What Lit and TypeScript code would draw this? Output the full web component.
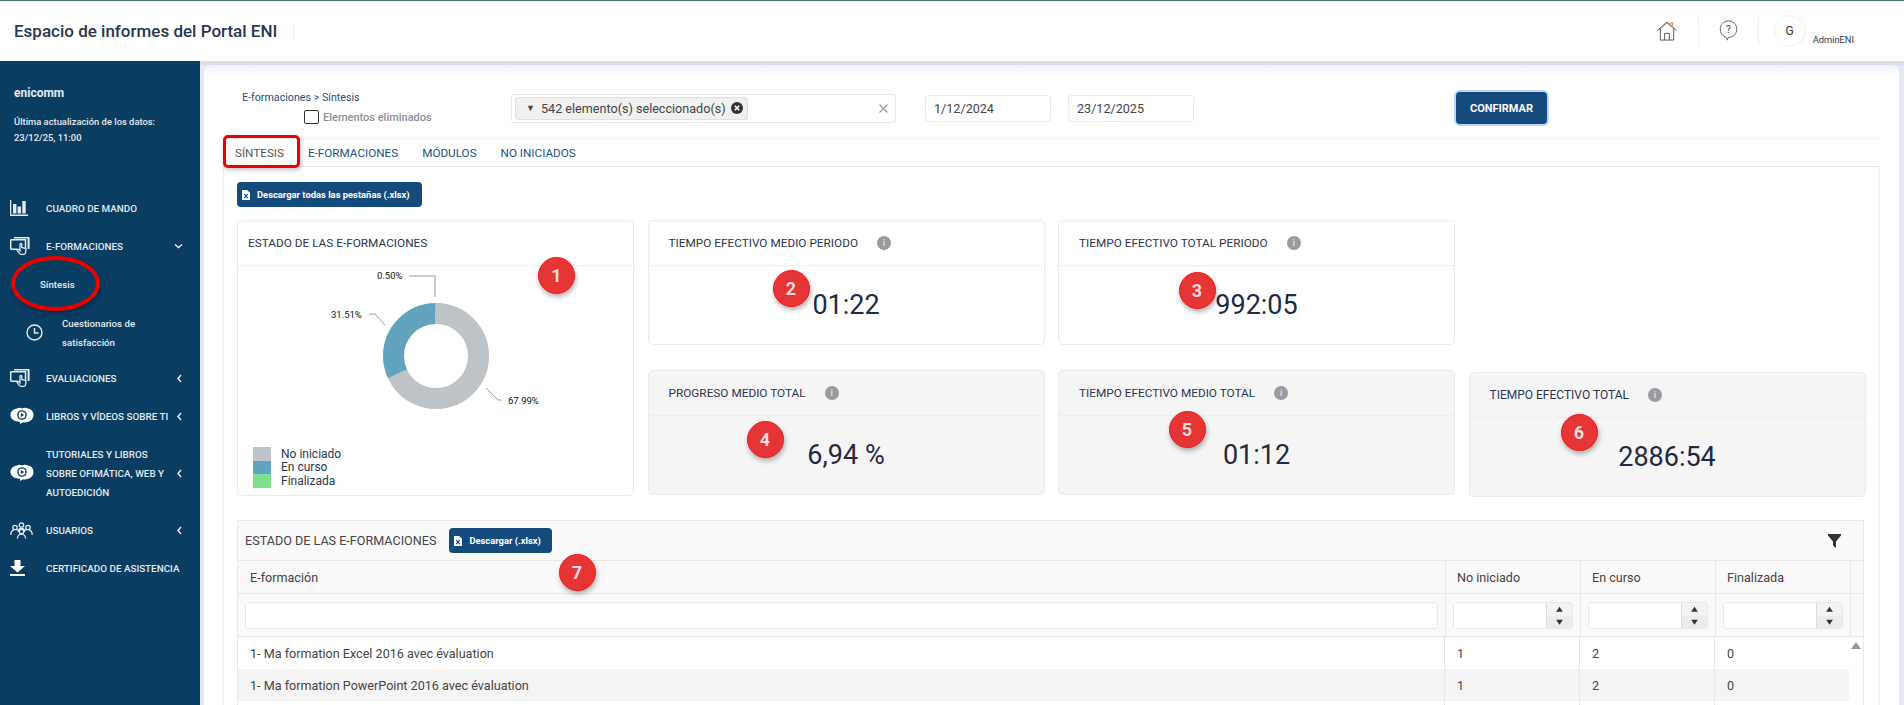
import { LitElement, html, css, svg } from "lit";
import { customElement } from "lit/decorators.js";

const chartIcon = html`<svg width="18" height="16" viewBox="0 0 18 16"><path fill="#e4eaf0" d="M0 0h1.300v14.600H18V16H0zM3 4h3.400v9.500H3zM7.600 6.500H11v7H7.600zM12.300 1h3.400v12.500h-3.400z"/></svg>`;
const handIcon = html`<svg width="20" height="18" viewBox="0 0 20 18"><path fill="#e4eaf0" d="M4 0h14.600c.6 0 1 .4 1 1v10c0 .6-.4 1-1 1h-1V1.600H4z"/><path fill="none" stroke="#e4eaf0" stroke-width="1.500" d="M1.500 2.700h14v9.600h-6M7 12.300H1.500c-.5 0-.8-.3-.8-.8V3.400c0-.4.3-.7.8-.7"/><path fill="#0a3d62" stroke="#e4eaf0" stroke-width="1.300" d="M10 7.200c0-1.200 1.800-1.200 1.800 0v3.300l3.300.8c.8.200 1 .8.900 1.500l-.5 3c-.2.900-.8 1.500-1.800 1.500h-2.600c-.8 0-1.300-.3-1.800-.9l-2.200-3c-.6-.9.600-1.800 1.300-1l1.600 1.500z"/></svg>`;
const eyeIcon = html`<svg width="24" height="18" viewBox="0 0 24 18"><path fill="#fff" d="M7 1.500c2-1 3.500-.8 5 0 1.500-.8 4-1 6 0 3 .2 5.500 3.200 5.500 6.500s-2.500 6.300-5.500 6.700c-1.500.8-3.300.9-4.800.5L10 17v-2.200c-1 0-2-.1-3-.5C3.500 14 .5 11.500.5 8S3.500 1.800 7 1.500z"/><circle cx="12" cy="8" r="4.800" fill="#0a3d62"/><circle cx="12" cy="8" r="3.400" fill="#fff"/><path fill="#0a3d62" d="M10.800 5.900 14.200 8l-3.400 2.100z"/></svg>`;
const usersIcon = html`<svg width="23" height="17" viewBox="0 0 23 17" fill="none" stroke="#e4eaf0" stroke-width="1.300"><circle cx="5" cy="5.500" r="2.200"/><path d="M.8 13c0-2.500 1.500-4.500 3-4.800M8 7.500 6.700 8.200"/><circle cx="18" cy="5.500" r="2.200"/><path d="M22.200 13c0-2.500-1.500-4.500-3-4.800M15 7.500l1.300.7"/><circle cx="11.500" cy="3" r="2.200"/><path d="M8.300 10c0-2 1.300-3.600 3.200-3.600s3.200 1.600 3.200 3.600"/><circle cx="11.500" cy="9.500" r="2.200"/><path d="M7.400 16.600c0-2.500 1.700-4.500 4.100-4.500s4.100 2 4.100 4.500"/></svg>`;
const downloadIcon = html`<svg width="15" height="16" viewBox="0 0 15 16"><path fill="#fff" d="M4.500 0h6v6H15L7.500 12.500 0 6h4.500zM0 14h15v2H0z"/></svg>`;
const clockIcon = html`<svg width="17" height="17" viewBox="0 0 17 17" fill="none" stroke="#e8edf2" stroke-width="1.400"><circle cx="8.500" cy="8.500" r="7.500"/><path d="M8.500 4v5h4"/></svg>`;
const fileIcon = html`<svg width="8" height="10" viewBox="0 0 8 10"><path fill="#fff" d="M0 0h5.200L8 2.800V10H0z"/><path stroke="#154a7d" stroke-width="1.200" d="m2.200 4.200 3.600 4m0-4-3.600 4"/></svg>`;

const chevronLeft = html`<svg class="chev" width="7" height="9" viewBox="0 0 7 9"><path fill="none" stroke="#e8edf2" stroke-width="1.500" d="M5 1 2 4.500 5 8"/></svg>`;
const chevronDown = html`<svg class="chev" width="9" height="7" viewBox="0 0 9 7"><path fill="none" stroke="#e8edf2" stroke-width="1.500" d="M1 1.500l3.500 3 3.500-3"/></svg>`;

const slices = [
  { value: 67.99, color: "#bdc3c7", label: "No iniciado" },
  { value: 31.51, color: "#61a3bc", label: "En curso" },
  { value: 0.5, color: "#7ee08f", label: "Finalizada" },
];

const rows = [
  { name: "1- Ma formation Excel 2016 avec évaluation", a: 1, b: 2, c: 0 },
  { name: "1- Ma formation PowerPoint 2016 avec évaluation", a: 1, b: 2, c: 0 },
];

const badges = [
  { n: 1, x: 556.5, y: 275 },
  { n: 2, x: 791, y: 288 },
  { n: 3, x: 1197, y: 290 },
  { n: 4, x: 765, y: 439 },
  { n: 5, x: 1187, y: 429 },
  { n: 6, x: 1579, y: 432 },
  { n: 7, x: 577, y: 572 },
];

@customElement("app-root")
export class AppRoot extends LitElement {
  static styles = css`
    :host {
      display: block;
      position: relative;
      height: 705px;
      overflow: hidden;
      font-family: Roboto, "Liberation Sans", sans-serif;
      color: #333;
      background: #e4e8f2;
    }
    * {
      box-sizing: border-box;
    }

    .top {
      height: 61px;
      background: #fff;
      border-top: 1px solid #4c7a6c;
      display: flex;
      align-items: center;
      padding: 0 50px 0 14px;
    }
    .top h1 {
      margin: 0;
      font-size: 17px;
      font-weight: 500;
      color: #2a3550;
      padding-right: 16px;
      border-right: 1px solid #eceef2;
      line-height: 17px;
    }
    .top-right {
      margin-left: auto;
      display: flex;
      align-items: center;
    }
    .top-sep {
      width: 1px;
      height: 28px;
      background: #eceef2;
      margin: 0 20px;
    }
    .avatar {
      width: 32px;
      height: 32px;
      border-radius: 50%;
      border: 1px solid #eef0f6;
      display: flex;
      align-items: center;
      justify-content: center;
      font-size: 12px;
      color: #333;
      margin-left: -5px;
    }
    .user {
      font-size: 9.3px;
      color: #2a3550;
      margin: 16px 0 0 7px;
    }

    .layout {
      display: flex;
      height: 644px;
    }
    .side {
      width: 200px;
      flex: none;
      background: #0a3d62;
      color: #e4eaf0;
      font-weight: 500;
    }
    .side-head {
      padding: 22px 14px 0;
    }
    .brand {
      font-size: 12px;
      font-weight: 700;
      line-height: 20px;
      margin-bottom: 11px;
    }
    .updated {
      font-size: 9.4px;
      line-height: 16px;
    }
    .menu {
      margin-top: 43px;
      font-size: 9.85px;
    }
    .item {
      display: flex;
      align-items: center;
      height: 38px;
      padding: 0 17px 0 10px;
      white-space: nowrap;
    }
    .item .ico {
      width: 36px;
      flex: none;
      display: flex;
    }
    .item.tall {
      height: 76px;
      line-height: 19px;
    }
    .chev {
      margin-left: auto;
    }
    .sub {
      display: flex;
      align-items: center;
      height: 39px;
      padding-left: 40px;
      font-size: 9.7px;
    }
    .sub.two {
      height: 55px;
      padding: 10px 0 8px 26px;
      line-height: 19px;
    }
    .sub.two svg {
      flex: none;
      margin-right: 19px;
    }

    .main {
      flex: 1;
      min-width: 0;
      border-top: 4px solid #dde0ea;
      padding: 0 5px 0 4px;
    }
    .sheet {
      height: 100%;
      background: linear-gradient(#f1f2f6, #fff 12px);
      border-radius: 6px 6px 0 0;
      padding-top: 25px;
    }

    .bar {
      display: flex;
      align-items: center;
      height: 36px;
      padding-left: 38px;
    }
    .crumbs {
      width: 269px;
      flex: none;
    }
    .crumb {
      font-size: 10.7px;
      line-height: 14px;
      color: #1c4f7e;
    }
    .deleted {
      display: flex;
      align-items: center;
      gap: 4px;
      height: 16px;
      margin: 4px 0 0 62px;
      font-size: 11px;
      font-weight: 500;
      color: #8c9099;
    }
    .box {
      width: 15px;
      height: 14px;
      border: 1px solid #333;
      border-radius: 2px;
      background: #fff;
    }
    .select {
      width: 385px;
      height: 29px;
      flex: none;
      border: 1px solid #e6e6ea;
      border-radius: 3px;
      display: flex;
      align-items: center;
      padding: 0 6px 0 3px;
    }
    .chip {
      width: 233px;
      height: 23px;
      background: #f0f0f0;
      border: 1px solid #e0e0e0;
      border-radius: 3px;
      display: flex;
      align-items: center;
      padding-left: 10px;
      font-size: 12.6px;
      color: #444;
      white-space: nowrap;
    }
    .caret {
      font-size: 9px;
      width: 15px;
    }
    .chip svg {
      margin-left: 5px;
    }
    .clear {
      margin-left: auto;
      margin-right: 1px;
    }
    .date {
      width: 126px;
      height: 27px;
      border: 1px solid #eaeaee;
      border-radius: 3px;
      padding: 0 8px;
      font: 12.6px Roboto, sans-serif;
      color: #444;
      outline: none;
      flex: none;
    }
    .date.d1 {
      margin-left: 29px;
    }
    .date.d2 {
      margin-left: 17px;
    }
    .confirm {
      margin-left: 262px;
      width: 91px;
      height: 32px;
      background: #154a7d;
      color: #fff;
      border: 0;
      border-radius: 4px;
      box-shadow: 0 0 0 2px #b9d7f6;
      font: 700 11px Roboto, sans-serif;
    }

    .tabs {
      margin: 12px 19px 0;
      display: flex;
      height: 29px;
      border-top: 1px solid #eceef2;
      border-bottom: 1px solid #e6e8ee;
      font-size: 11.7px;
      color: #1c4f7e;
    }
    .tab {
      padding: 0 12px;
      display: flex;
      align-items: center;
    }
    .tab.on {
      color: #555;
    }
    .panel {
      margin: 0 19px;
      height: 539px;
      border: 1px solid #eceef2;
      border-width: 0 1px;
      padding: 15px 15px 0 13px;
    }
    .dl {
      height: 25px;
      display: inline-flex;
      align-items: center;
      gap: 7px;
      padding: 0 5px;
      background: #154a7d;
      color: #fff;
      border-radius: 4px;
      font-size: 9.4px;
      font-weight: 700;
      white-space: nowrap;
    }
    .dl.all {
      width: 185px;
      display: flex;
      margin-bottom: 13px;
    }

    .cards {
      display: grid;
      grid-template-columns: repeat(4, 397px);
      grid-template-rows: 125px 125px;
      column-gap: 13.5px;
      row-gap: 25px;
    }
    .card {
      display: flex;
      flex-direction: column;
      border: 1px solid #e8eaf2;
      border-radius: 5px;
      background: #fff;
    }
    .card.grey {
      background: #f5f5f6;
    }
    .card.big {
      grid-row: 1 / span 2;
      margin-bottom: -1px;
    }
    .card.last {
      grid-column: 4;
      margin: 2px 0 -2px;
    }
    .card.c3 {
      grid-column: 3;
    }
    .card.c2 {
      grid-column: 2;
    }
    .card-head {
      height: 45px;
      flex: none;
      display: flex;
      align-items: center;
      padding-left: 20px;
      border-bottom: 1px solid #eceef4;
      font-size: 11.8px;
      color: #2a3550;
      white-space: nowrap;
    }
    .big .card-head {
      padding-left: 10px;
    }
    .last .card-head {
      font-size: 12px;
    }
    .info {
      width: 14px;
      height: 14px;
      border-radius: 50%;
      background: #9a9a9f;
      color: #ddd;
      font-size: 9px;
      font-weight: 700;
      display: flex;
      align-items: center;
      justify-content: center;
      margin-left: 19px;
    }
    .value {
      flex: 1;
      display: flex;
      align-items: center;
      justify-content: center;
      font-size: 27px;
      color: #1f2a44;
    }
    .chart {
      display: block;
      font-size: 9.5px;
      fill: #111;
    }
    .legend {
      padding-left: 15px;
      font-size: 12px;
      color: #2a3550;
    }
    .legend div {
      display: flex;
      align-items: center;
      height: 13.5px;
    }
    .legend i {
      width: 18px;
      height: 100%;
      margin-right: 10px;
    }

    .tbl {
      margin-top: 25px;
      border: 1px solid #e8e8e8;
      border-bottom: 0;
      font-size: 12.6px;
      color: #444;
    }
    .tbl-bar {
      height: 40px;
      background: #f9f9f9;
      display: flex;
      align-items: center;
      padding: 0 22px 0 7px;
      border-bottom: 1px solid #e8e8e8;
    }
    .tbl-bar span.t {
      margin-right: 13px;
    }
    .tbl-bar .dl {
      width: 103px;
    }
    .tbl-bar svg.funnel {
      margin-left: auto;
    }
    .hrow,
    .frow,
    .row {
      display: grid;
      grid-template-columns: 1207px 135px 135px 135px 13px;
    }
    .hrow {
      height: 33px;
      background: #f9f9f9;
      border-bottom: 1px solid #e8e8e8;
    }
    .hrow > div {
      display: flex;
      align-items: center;
      padding-left: 12px;
    }
    .hrow > div + div {
      padding-left: 11px;
    }
    .frow {
      height: 43px;
      background: #f9f9f9;
      border-bottom: 1px solid #e8e8e8;
      align-items: center;
    }
    .hrow > div + div,
    .frow > div + div {
      border-left: 1px solid #e8e8e8;
      height: 100%;
    }
    .frow > div {
      padding: 8px 7px;
      height: 100%;
    }
    .frow input {
      display: block;
      width: 100%;
      height: 27px;
      border: 1px solid #e8e8e8;
      border-radius: 3px;
      outline: none;
      background: #fff;
    }
    .spin {
      display: flex;
      height: 27px;
      width: 120px;
      border: 1px solid #e8e8e8;
      border-radius: 3px;
      overflow: hidden;
    }
    .spin span {
      flex: 1;
      background: #fff;
      border-right: 1px solid #ddd;
    }
    .spin b {
      width: 25px;
      flex: none;
      display: flex;
      flex-direction: column;
      background: #f3f3f3;
    }
    .spin b svg {
      flex: 1;
      display: block;
      width: 100%;
    }
    .spin b svg + svg {
      background: #ececec;
    }
    .rows {
      display: flex;
    }
    .rows-list {
      width: 1611px;
      flex: none;
    }
    .row {
      height: 32px;
      grid-template-columns: 1206px 135px 135px 135px;
    }
    .row:nth-child(even) {
      background: #f4f4f4;
    }
    .row > div {
      display: flex;
      align-items: center;
      padding-left: 12px;
    }
    .row > div + div {
      border-left: 1px solid #e8e8e8;
    }
    .scroll {
      flex: 1;
      display: flex;
      justify-content: center;
      padding-top: 5px;
    }

    .badge {
      position: absolute;
      width: 37px;
      height: 37px;
      margin: -18.5px 0 0 -18.5px;
      border-radius: 50%;
      background: #e53535;
      border: 1.5px solid #f21a1a;
      box-shadow: 1px 3px 5px rgba(0, 0, 0, 0.3);
      color: #f6dede;
      font-size: 18px;
      font-weight: 700;
      display: flex;
      align-items: center;
      justify-content: center;
    }
    .mark-tab {
      position: absolute;
      left: 223px;
      top: 135px;
      width: 77px;
      height: 33px;
      border: 3px solid #ee0000;
      border-radius: 5px;
      box-shadow: 1px 2px 4px rgba(0, 0, 0, 0.25);
    }
    .mark-oval {
      position: absolute;
      left: 11px;
      top: 256px;
      width: 89px;
      height: 55px;
      border: 4px solid #ee0000;
      border-radius: 50%;
      box-shadow: 1px 2px 4px rgba(0, 0, 0, 0.3);
    }
  `;

  private renderDonut() {
    const r = 42.5;
    const len = 2 * Math.PI * r;
    let acc = 0;
    return slices.map((s) => {
      const dash = (s.value / 100) * len;
      const part = svg`<circle cx="198" cy="90" r=${r} fill="none" stroke=${s.color} stroke-width="21"
        stroke-dasharray="${dash} ${len - dash}" stroke-dashoffset=${-acc} transform="rotate(-90 198 90)"/>`;
      acc += dash;
      return part;
    });
  }

  private card(title: string, value: string, cls: string) {
    return html`<div class="card ${cls}">
      <div class="card-head">${title}<span class="info">i</span></div>
      <div class="value">${value}</div>
    </div>`;
  }

  private spinner() {
    return html`<div>
      <div class="spin">
        <span></span>
        <b>
          <svg viewBox="0 0 25 13" height="13"><path fill="#333" d="M9 9l3.500-5L16 9z"/></svg>
          <svg viewBox="0 0 25 13" height="13"><path fill="#333" d="M9 4l3.500 5L16 4z"/></svg>
        </b>
      </div>
    </div>`;
  }

  render() {
    return html`
      <header class="top">
        <h1>Espacio de informes del Portal ENI</h1>
        <div class="top-right">
          <svg width="22" height="20" viewBox="0 0 22 21" fill="none" stroke="#555" stroke-width="1">
            <path d="M1 10 11 1l10 9M4 8v12h14V8M8.500 20v-7h5v7"/>
            <path stroke="#c07a50" d="M3 9l8-7 8 7M15 4V2h2v3.500"/>
          </svg>
          <div class="top-sep"></div>
          <svg width="19" height="22" viewBox="0 0 20 24" fill="none" stroke="#555" stroke-width="1">
            <path d="M10 1c5 0 9 4 9 9s-4 9-8.500 9c-1 0-1.500 1-1.500 3l-2-3.500C3 17.500 1 14 1 10c0-5 4-9 9-9z"/>
            <text x="10" y="14" font-size="11" text-anchor="middle" fill="#444" stroke="none">?</text>
          </svg>
          <div class="top-sep"></div>
          <div class="avatar">G</div>
          <div class="user">AdminENI</div>
        </div>
      </header>
      <div class="layout">
        <nav class="side">
          <div class="side-head">
            <div class="brand">enicomm</div>
            <div class="updated">Última actualización de los datos:<br />23/12/25, 11:00</div>
          </div>
          <div class="menu">
            <div class="item"><span class="ico">${chartIcon}</span>CUADRO DE MANDO</div>
            <div class="item"><span class="ico">${handIcon}</span>E-FORMACIONES${chevronDown}</div>
            <div class="sub">Síntesis</div>
            <div class="sub two">${clockIcon}<span>Cuestionarios de<br />satisfacción</span></div>
            <div class="item"><span class="ico">${handIcon}</span>EVALUACIONES${chevronLeft}</div>
            <div class="item"><span class="ico">${eyeIcon}</span>LIBROS Y VÍDEOS SOBRE TI${chevronLeft}</div>
            <div class="item tall">
              <span class="ico">${eyeIcon}</span>
              <span>TUTORIALES Y LIBROS<br />SOBRE OFIMÁTICA, WEB Y<br />AUTOEDICIÓN</span>
              ${chevronLeft}
            </div>
            <div class="item"><span class="ico">${usersIcon}</span>USUARIOS${chevronLeft}</div>
            <div class="item"><span class="ico">${downloadIcon}</span>CERTIFICADO DE ASISTENCIA</div>
          </div>
        </nav>
        <main class="main">
          <div class="sheet">
            <div class="bar">
              <div class="crumbs">
                <div class="crumb">E-formaciones &gt; Síntesis</div>
                <div class="deleted"><span class="box"></span>Elementos eliminados</div>
              </div>
              <div class="select">
                <div class="chip">
                  <span class="caret">▼</span>542 elemento(s) seleccionado(s)
                  <svg width="12" height="12" viewBox="0 0 12 12">
                    <circle cx="6" cy="6" r="6" fill="#333"/>
                    <path stroke="#fff" stroke-width="1.600" d="m3.800 3.800 4.400 4.400m0-4.400L3.800 8.200"/>
                  </svg>
                </div>
                <svg class="clear" width="9" height="9" viewBox="0 0 9 9">
                  <path stroke="#999" stroke-width="1.300" d="m.5.500 8 8m0-8-8 8"/>
                </svg>
              </div>
              <input class="date d1" value="1/12/2024" />
              <input class="date d2" value="23/12/2025" />
              <button class="confirm">CONFIRMAR</button>
            </div>
            <div class="tabs">
              <div class="tab on">SÍNTESIS</div>
              <div class="tab">E-FORMACIONES</div>
              <div class="tab">MÓDULOS</div>
              <div class="tab">NO INICIADOS</div>
            </div>
            <div class="panel">
              <div class="dl all">${fileIcon}Descargar todas las pestañas (.xlsx)</div>
              <div class="cards">
                <div class="card big">
                  <div class="card-head">ESTADO DE LAS E-FORMACIONES</div>
                  <svg class="chart" width="395" height="181" viewBox="0 0 395 181">
                    ${this.renderDonut()}
                    <g fill="none" stroke="#999" stroke-width="1">
                      <path d="M171 10h26v21"/>
                      <path d="M131 48h6l10 11"/>
                      <path d="M248 122l12 12h3"/>
                    </g>
                    <text x="139" y="13">0.50%</text>
                    <text x="93" y="52">31.51%</text>
                    <text x="270" y="138">67.99%</text>
                  </svg>
                  <div class="legend">
                    ${slices.map(
                      (s) => html`<div><i style="background:${s.color}"></i>${s.label}</div>`
                    )}
                  </div>
                </div>
                ${this.card("TIEMPO EFECTIVO MEDIO PERIODO", "01:22", "c2")}
                ${this.card("TIEMPO EFECTIVO TOTAL PERIODO", "992:05", "c3")}
                ${this.card("PROGRESO MEDIO TOTAL", "6,94 %", "grey c2")}
                ${this.card("TIEMPO EFECTIVO MEDIO TOTAL", "01:12", "grey c3")}
                ${this.card("TIEMPO EFECTIVO TOTAL", "2886:54", "grey last")}
              </div>
              <div class="tbl">
                <div class="tbl-bar">
                  <span class="t">ESTADO DE LAS E-FORMACIONES</span>
                  <div class="dl">${fileIcon}Descargar (.xlsx)</div>
                  <svg class="funnel" width="13" height="14" viewBox="0 0 13 14">
                    <path fill="#333" d="M0 0h13v1.500L8 7.500V14L5 11.500v-4L0 1.500z"/>
                  </svg>
                </div>
                <div class="hrow">
                  <div>E-formación</div>
                  <div>No iniciado</div>
                  <div>En curso</div>
                  <div>Finalizada</div>
                  <div></div>
                </div>
                <div class="frow">
                  <div><input /></div>
                  ${this.spinner()} ${this.spinner()} ${this.spinner()}
                  <div></div>
                </div>
                <div class="rows">
                  <div class="rows-list">
                    ${rows.map(
                      (r) => html`<div class="row">
                        <div>${r.name}</div>
                        <div>${r.a}</div>
                        <div>${r.b}</div>
                        <div>${r.c}</div>
                      </div>`
                    )}
                    <div class="row"><div></div><div></div><div></div><div></div></div>
                  </div>
                  <div class="scroll">
                    <svg width="10" height="7" viewBox="0 0 10 7"><path fill="#999" d="M5 0l5 7H0z"/></svg>
                  </div>
                </div>
              </div>
            </div>
          </div>
        </main>
      </div>
      <div class="mark-tab"></div>
      <div class="mark-oval"></div>
      ${badges.map(
        (b) => html`<div class="badge" style="left:${b.x}px;top:${b.y}px">${b.n}</div>`
      )}
    `;
  }
}
